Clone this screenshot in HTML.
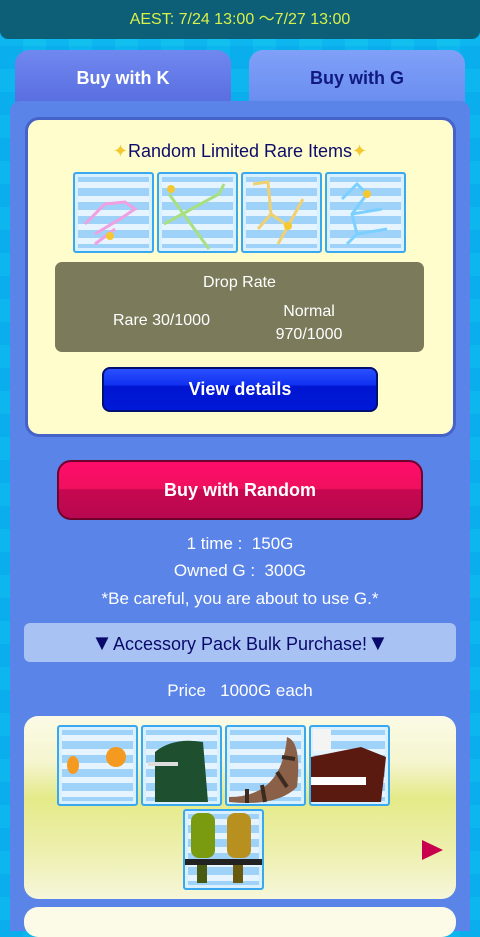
<!DOCTYPE html>
<html><head><meta charset="utf-8"><style>
*{margin:0;padding:0;box-sizing:border-box}
body{width:480px;height:917px;overflow:hidden;position:relative;font-family:"Liberation Sans","DejaVu Sans",sans-serif;
background-color:#12c0f0;
background-image:linear-gradient(90deg,rgba(0,150,230,.25) 50%,transparent 50%),linear-gradient(rgba(0,150,230,.25) 50%,transparent 50%);
background-size:46px 46px,46px 46px}
.a{position:absolute}
.hdr{left:0;top:0;width:480px;height:39px;background:#0d5f78;border-radius:0 0 8px 8px;color:#d8f048;font-size:16px;text-align:center;line-height:40px}
.tab{top:50px;width:216px;height:52px;border-radius:14px 14px 0 0;text-align:center;line-height:56px;font-size:18px;font-weight:bold}
.panel{left:10px;top:101px;width:460px;height:830px;background:#5a84e8;border-radius:10px 10px 0 0}
.cream{left:25px;top:117px;width:431px;height:320px;background:#fffdcc;border:3px solid #4563c8;border-radius:14px}
.title{left:0;top:141px;width:480px;text-align:center;color:#0c0c6a;font-size:18px}
.ic{width:81px;height:81px;border:2px solid #3aa8ee;border-radius:3px;background:repeating-linear-gradient(#9ed2f8 0 8px,#e6f4ff 8px 14px);box-shadow:inset 0 0 0 3px #d8f0ff}
.drop{left:55px;top:262px;width:369px;height:90px;background:#7b7b5c;border-radius:7px;color:#fff;font-size:16px}
.btn{text-align:center;color:#fff;font-weight:bold}
.w{color:#fff;font-size:17px;text-align:center;width:480px;left:0;white-space:pre}
.spark{color:#f5c830;font-size:18px}
</style></head><body>
<div class="a hdr">AEST: 7/24 13:00 〜7/27 13:00</div>
<div class="a tab" style="left:15px;background:linear-gradient(#7088f0,#5a6ee0);color:#fff">Buy with K</div>
<div class="a tab" style="left:249px;background:linear-gradient(#80a0f8,#6a8ef0);color:#101a80">Buy with G</div>
<div class="a panel"></div>
<div class="a cream"></div>
<div class="a title"><span class="spark">✦</span>Random Limited Rare Items<span class="spark">✦</span></div>

<div class="a ic" style="left:73px;top:172px"><svg width="77" height="77"><path d="M10 50 L30 30 L50 28 L60 35 L45 45 L20 60 M40 55 L20 70" stroke="#f0a0e0" stroke-width="3" fill="none"/><circle cx="35" cy="62" r="4" fill="#f5c830"/></svg></div>
<div class="a ic" style="left:157px;top:172px"><svg width="77" height="77"><path d="M10 20 L50 75 M5 50 L60 20 L65 10" stroke="#a8e080" stroke-width="3" fill="none"/><circle cx="12" cy="15" r="4" fill="#f5c830"/></svg></div>
<div class="a ic" style="left:241px;top:172px"><svg width="77" height="77"><path d="M10 10 L25 8 L28 40 L15 55 M28 40 L45 52 L60 25 M45 52 L35 70" stroke="#f0d070" stroke-width="3" fill="none"/><circle cx="45" cy="52" r="4" fill="#f5c830"/></svg></div>
<div class="a ic" style="left:325px;top:172px"><svg width="77" height="77"><path d="M15 25 L30 10 L40 20 L25 40 L30 60 L60 55 M25 40 L55 35 M30 60 L20 70" stroke="#7cd0ff" stroke-width="3" fill="none"/><circle cx="40" cy="20" r="4" fill="#f5c830"/></svg></div>

<div class="a drop"><div class="a" style="left:0;top:12px;width:369px;text-align:center">Drop Rate</div>
<div class="a" style="left:58px;top:50px">Rare 30/1000</div>
<div class="a" style="left:212px;top:38px;width:84px;text-align:center;line-height:23px">Normal<br>970/1000</div></div>

<div class="a btn" style="left:102px;top:367px;width:276px;height:45px;background:linear-gradient(#2a50ff 0,#1030f0 40%,#0016d0 41%,#0018d8);border:2px solid #001070;border-radius:8px;line-height:41px;font-size:18px">View details</div>

<div class="a btn" style="left:57px;top:460px;width:366px;height:60px;background:linear-gradient(#ff0c6a 0,#f0105e 48%,#c80850 49%,#b80850);border:2px solid #70002c;border-radius:14px;line-height:56px;font-size:18px">Buy with Random</div>

<div class="a w" style="top:534px">1 time :  150G</div>
<div class="a w" style="top:561px">Owned G :  300G</div>
<div class="a w" style="top:589px">*Be careful, you are about to use G.*</div>
<div class="a" style="left:24px;top:623px;width:432px;height:39px;background:#a8c2f4;border-radius:6px;color:#0a0a6a;font-size:18px;text-align:center;line-height:40px"><span style="font-size:22px">▼</span>Accessory Pack Bulk Purchase!<span style="font-size:22px">▼</span></div>
<div class="a w" style="top:681px">Price   1000G each</div>

<div class="a" style="left:24px;top:716px;width:432px;height:183px;border-radius:14px;background:linear-gradient(#fbfbe6 0,#f5f5d0 25%,#e4ea88 45%,#eef0b0 75%,#f6f6da)"></div>
<div class="a ic" style="left:57px;top:725px"><svg width="77" height="77"><ellipse cx="14" cy="38" rx="6" ry="9" fill="#f59a20"/><circle cx="57" cy="30" r="10" fill="#f59a20"/></svg></div>
<div class="a ic" style="left:141px;top:725px"><svg width="77" height="77"><path d="M12 75 L12 25 Q30 10 60 15 L65 75 Z" fill="#1e5030"/><rect x="5" y="35" width="30" height="4" fill="#ddd"/></svg></div>
<div class="a ic" style="left:225px;top:725px"><svg width="77" height="77"><path d="M2 70 Q55 70 60 10 Q75 15 70 60 Q50 80 2 75 Z" fill="#8a6048"/><path d="M20 62 L20 76 M35 58 L38 75 M50 45 L60 60 M55 30 L68 32" stroke="#3a2a20" stroke-width="4"/></svg></div>
<div class="a ic" style="left:309px;top:725px"><svg width="77" height="77"><rect x="2" y="2" width="18" height="22" fill="#f4f4f4"/><path d="M0 30 L50 20 L75 30 L70 75 L0 75 Z" fill="#5a1a10"/><rect x="0" y="50" width="55" height="8" fill="#fff"/></svg></div>
<div class="a ic" style="left:183px;top:809px"><svg width="77" height="77"><rect x="6" y="2" width="24" height="45" rx="8" fill="#7a9a10"/><rect x="42" y="2" width="24" height="45" rx="8" fill="#b89020"/><rect x="0" y="48" width="77" height="6" fill="#222"/><rect x="12" y="54" width="10" height="18" fill="#4a5a10"/><rect x="48" y="54" width="10" height="18" fill="#6a5a10"/></svg></div>
<div class="a" style="left:422px;top:840px;width:0;height:0;border-left:21px solid #c8004e;border-top:10px solid transparent;border-bottom:10px solid transparent"></div>
<div class="a" style="left:24px;top:907px;width:432px;height:30px;border-radius:14px;background:#fbfbe8"></div>
</body></html>
